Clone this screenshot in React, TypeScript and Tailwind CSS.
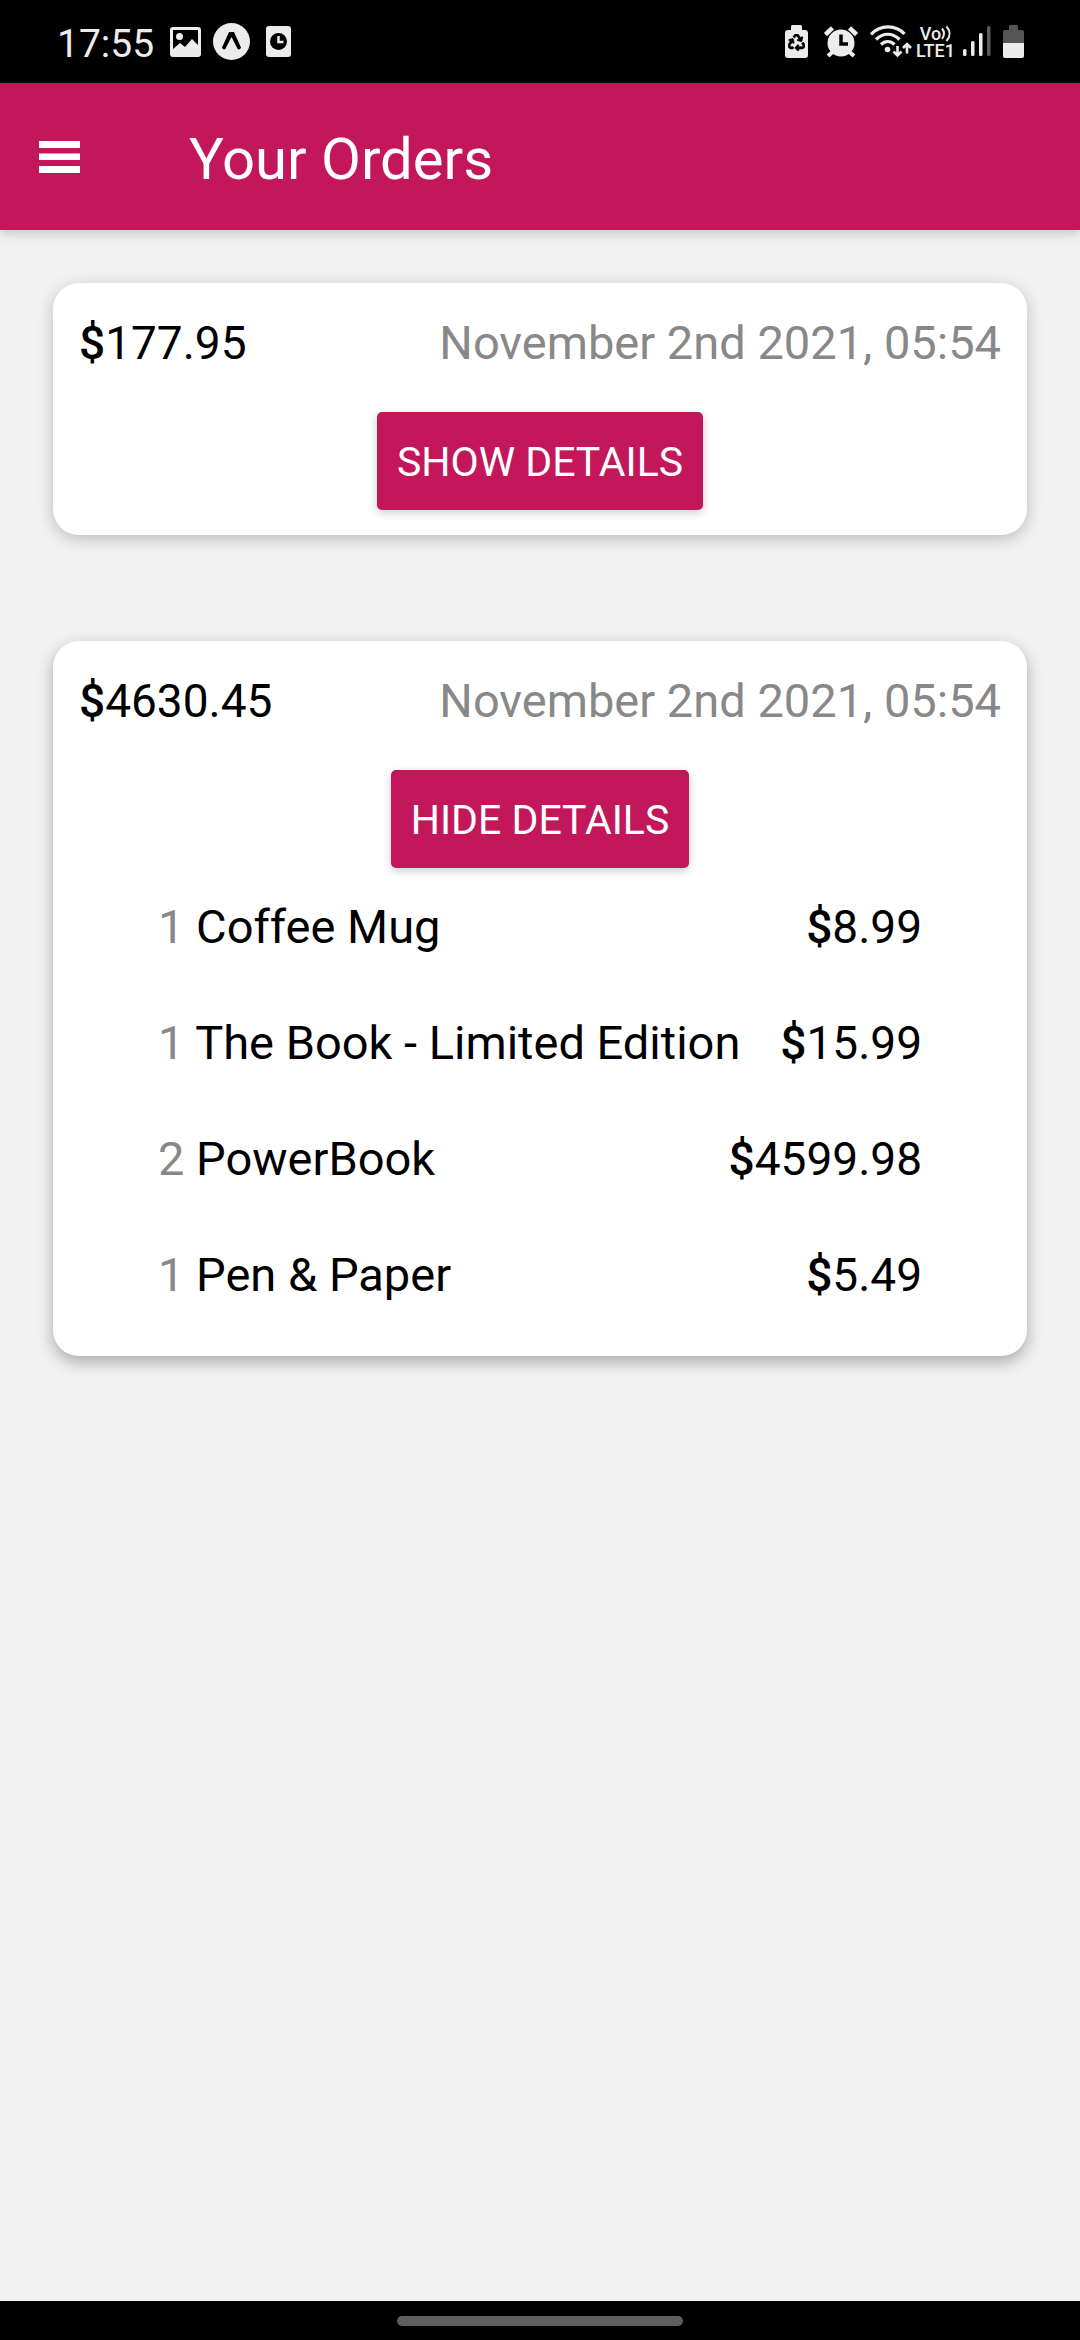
import { useState } from "react";
import { FaRecycle } from "react-icons/fa";

type Item = { quantity: number; title: string; sum: string };
type Order = { id: string; total: string; date: string; items: Item[]; open: boolean };

const orders: Order[] = [
  {
    id: "o1",
    total: "177.95",
    date: "November 2nd 2021, 05:54",
    items: [],
    open: false,
  },
  {
    id: "o2",
    total: "4630.45",
    date: "November 2nd 2021, 05:54",
    open: true,
    items: [
      { quantity: 1, title: "Coffee Mug", sum: "8.99" },
      { quantity: 1, title: "The Book - Limited Edition", sum: "15.99" },
      { quantity: 2, title: "PowerBook", sum: "4599.98" },
      { quantity: 1, title: "Pen & Paper", sum: "5.49" },
    ],
  },
];

function PictureIcon() {
  return (
    <svg width="31" height="30" viewBox="0 0 31 30" fill="currentColor" aria-hidden="true">
      <path
        fillRule="evenodd"
        d="M3 0h25a3 3 0 0 1 3 3v24a3 3 0 0 1-3 3H3a3 3 0 0 1-3-3V3a3 3 0 0 1 3-3Zm0 3v19l7-6 5 4 7-8 6 6V3Z"
      />
      <circle cx="9.500" cy="9.500" r="3.500" />
    </svg>
  );
}

function ExpoIcon() {
  return (
    <svg width="37" height="37" viewBox="0 0 37 37" aria-hidden="true">
      <circle cx="18.500" cy="18.500" r="18.500" fill="currentColor" />
      <path
        d="M16 9h5l7 15.500c-.3 1.500-2 2.500-3.300 1.500L18.500 14l-6.200 12c-1.300 1-3 0-3.300-1.500Z"
        fill="#000"
      />
    </svg>
  );
}

function ClockCardIcon() {
  return (
    <svg width="25" height="31" viewBox="0 0 25 31" aria-hidden="true">
      <rect width="25" height="31" rx="3" fill="currentColor" />
      <circle cx="12.500" cy="15.500" r="8.500" fill="#000" />
      <path d="M12.500 10v6h5" fill="none" stroke="currentColor" strokeWidth="2.500" />
    </svg>
  );
}

function RecycleBatteryIcon() {
  return (
    <svg width="23" height="33" viewBox="0 0 23 33" aria-hidden="true">
      <path
        d="M6 1.500A1.500 1.500 0 0 1 7.500 0h8A1.500 1.500 0 0 1 17 1.500V5h3a3 3 0 0 1 3 3v22a3 3 0 0 1-3 3H3a3 3 0 0 1-3-3V8a3 3 0 0 1 3-3h3Z"
        fill="currentColor"
      />
      <FaRecycle x="3" y="9" size={17} color="#000" stroke="#000" strokeWidth={24} />
    </svg>
  );
}

function AlarmIcon() {
  return (
    <svg width="34" height="32" viewBox="0 0 34 32" aria-hidden="true">
      <g stroke="currentColor" fill="none">
        <path d="M1.500 8.500 8.500 1.800M32.500 8.500 25.500 1.800" strokeWidth="4.500" />
        <path d="M9 25.500 4 30M25 25.500l5 4.500" strokeWidth="4" />
      </g>
      <circle cx="17" cy="17" r="13.500" fill="currentColor" />
      <path d="M17 8.500v9.500h7" stroke="#000" strokeWidth="3.500" fill="none" />
    </svg>
  );
}

function WifiIcon() {
  return (
    <svg width="42" height="33" viewBox="0 0 42 33" fill="none" stroke="currentColor" aria-hidden="true">
      <path d="M1 9.500C10.500-.5 25.500-.5 34.500 9" strokeWidth="3.200" />
      <path d="M6 14.500c7-7 16.500-7 23.500 0" strokeWidth="3.200" />
      <path d="M11 19.500c4-4 9.500-4 13.500 0" strokeWidth="3.200" />
      <circle cx="17.500" cy="24.500" r="2.800" fill="currentColor" stroke="none" />
      <path d="M27.500 21v9.500M23.500 26.500l4 4 4-4" strokeWidth="2.600" />
      <path d="M37 28.500V19M33 23l4-4 4 4" strokeWidth="2.600" />
    </svg>
  );
}

function VolteIndicator() {
  return (
    <div className="flex flex-col items-center text-[18px] leading-[17px] font-medium">
      <span className="flex items-center">
        Vo
        <svg width="10" height="17" viewBox="0 0 10 17" fill="none" stroke="currentColor" strokeWidth="2" aria-hidden="true">
          <path d="M1 3.500c2.500 3 2.500 7 0 10.500M5.500 1.500c4 4.500 4 10 0 14.500" />
        </svg>
      </span>
      <span>LTE1</span>
    </div>
  );
}

function SignalIcon() {
  return (
    <svg width="28" height="31" viewBox="0 0 28 31" fill="currentColor" aria-hidden="true">
      <rect x="0" y="23" width="3.500" height="7" rx="1.500" />
      <rect x="8" y="15" width="3.500" height="15" rx="1.500" />
      <rect x="16" y="7" width="3.500" height="23" rx="1.500" />
      <rect x="24" y="0" width="3.500" height="30" rx="1.500" fill="#5c5c5c" />
    </svg>
  );
}

function BatteryIcon() {
  return (
    <svg width="21" height="33" viewBox="0 0 21 33" aria-hidden="true">
      <path d="M6 1a1 1 0 0 1 1-1h7a1 1 0 0 1 1 1v4h4a2 2 0 0 1 2 2v11H0V7a2 2 0 0 1 2-2h4Z" fill="#555" />
      <path d="M0 18h21v13a2 2 0 0 1-2 2H2a2 2 0 0 1-2-2Z" fill="currentColor" />
    </svg>
  );
}

function StatusBar() {
  return (
    <div className="flex h-[83px] items-center justify-between bg-black pr-14 pl-[57px] text-[#ececec]">
      <div className="flex items-center">
        <span className="mr-4 pt-1 text-[39px] leading-[46px]">17:55</span>
        <PictureIcon />
        <span className="ml-3">
          <ExpoIcon />
        </span>
        <span className="ml-4">
          <ClockCardIcon />
        </span>
      </div>
      <div className="flex items-center">
        <RecycleBatteryIcon />
        <span className="ml-4">
          <AlarmIcon />
        </span>
        <span className="ml-3">
          <WifiIcon />
        </span>
        <span className="ml-1">
          <VolteIndicator />
        </span>
        <span className="ml-2">
          <SignalIcon />
        </span>
        <span className="ml-3">
          <BatteryIcon />
        </span>
      </div>
    </div>
  );
}

function Header() {
  return (
    <header className="flex h-[147px] items-center bg-[#c2185b] pl-[39px] text-white shadow-[0_3px_12px_rgba(0,0,0,0.2)]">
      <button type="button" aria-label="Open menu" className="mr-[109px]">
        <svg width="41" height="32" viewBox="0 0 41 32" fill="currentColor" aria-hidden="true">
          <path d="M0 0h41v7H0zM0 12.500h41v6.500H0zM0 25h41v7H0z" />
        </svg>
      </button>
      <h1 className="pt-1 text-[58px] leading-[68px]">Your Orders</h1>
    </header>
  );
}

function Price({ amount }: { amount: string }) {
  return (
    <span className="text-[46px]">
      <span className="font-medium">$</span>
      {amount}
    </span>
  );
}

function OrderCard({ order }: { order: Order }) {
  const [open, setOpen] = useState(order.open);
  return (
    <article
      className={
        open
          ? "rounded-[26px] bg-white px-[26px] pt-7 pb-[49px] shadow-[0_6px_16px_rgba(0,0,0,0.3)]"
          : "rounded-[26px] bg-white px-[26px] pt-7 pb-[25px] shadow-[0_4px_16px_rgba(0,0,0,0.22)]"
      }
    >
      <div className="flex h-16 items-baseline justify-between leading-[63px]">
        <Price amount={order.total} />
        <time className="text-[#888888]">{order.date}</time>
      </div>
      <div className="mt-[37px] flex justify-center">
        <button
          type="button"
          aria-expanded={open}
          onClick={() => setOpen(!open)}
          className="rounded-[5px] bg-[#c2185b] px-5 pt-[26px] pb-6 text-[41px] leading-[48px] text-white uppercase shadow-[0_3px_10px_rgba(0,0,0,0.2)]"
        >
          {open ? "Hide Details" : "Show Details"}
        </button>
      </div>
      {open && (
        <ul className="mt-[27px] flex flex-col gap-[52px] px-[79px] leading-[63px]">
          {order.items.map((item) => (
            <li key={item.title} className="flex h-16 items-baseline justify-between">
              <span>
                <span className="text-[#888888]">{item.quantity} </span>
                {item.title}
              </span>
              <Price amount={item.sum} />
            </li>
          ))}
        </ul>
      )}
    </article>
  );
}

export default function App() {
  return (
    <div className="flex min-h-screen flex-col bg-[#f2f2f2] font-['Roboto',sans-serif] text-[47px] text-black">
      <StatusBar />
      <Header />
      <main className="flex flex-1 flex-col gap-[106px] px-[53px] py-[53px]">
        {orders.map((order) => (
          <OrderCard key={order.id} order={order} />
        ))}
      </main>
      <footer className="flex h-[39px] items-center justify-center bg-black">
        <div className="h-[10px] w-[286px] rounded-full bg-[#5e5e5e]" />
      </footer>
    </div>
  );
}
